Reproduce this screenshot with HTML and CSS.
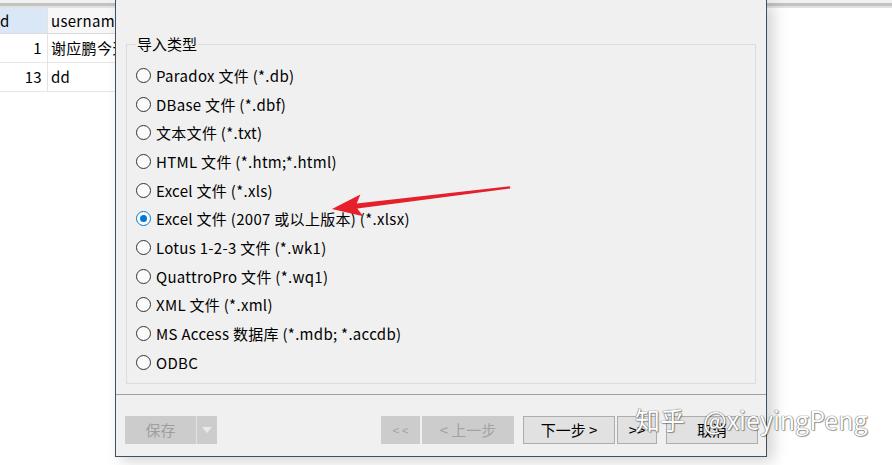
FILE: index.html
```html
<!DOCTYPE html>
<html lang="zh-CN">
<head>
<meta charset="utf-8">
<title>导入向导</title>
<link rel="stylesheet" href="styles.css">
</head>
<body>
<div class="screen">
  <div class="topbar"></div>
  <div class="grid">
    <div class="row head">
      <div class="c1">d</div>
      <div class="c2">username</div>
    </div>
    <div class="row">
      <div class="c1 num">1</div>
      <div class="c2">谢应鹏今天很开心</div>
    </div>
    <div class="row">
      <div class="c1 num">13</div>
      <div class="c2">dd</div>
    </div>
  </div>

  <div class="dialog">
    <div class="body">
      <fieldset class="group">
        <legend>导入类型</legend>
        <div class="opt"><span class="radio"></span>Paradox 文件 (*.db)</div>
        <div class="opt"><span class="radio"></span>DBase 文件 (*.dbf)</div>
        <div class="opt"><span class="radio"></span>文本文件 (*.txt)</div>
        <div class="opt"><span class="radio"></span>HTML 文件 (*.htm;*.html)</div>
        <div class="opt"><span class="radio"></span>Excel 文件 (*.xls)</div>
        <div class="opt"><span class="radio on"></span>Excel 文件 (2007 或以上版本) (*.xlsx)</div>
        <div class="opt"><span class="radio"></span>Lotus 1-2-3 文件 (*.wk1)</div>
        <div class="opt"><span class="radio"></span>QuattroPro 文件 (*.wq1)</div>
        <div class="opt"><span class="radio"></span>XML 文件 (*.xml)</div>
        <div class="opt"><span class="radio"></span>MS Access 数据库 (*.mdb; *.accdb)</div>
        <div class="opt"><span class="radio"></span>ODBC</div>
      </fieldset>
    </div>
    <div class="sep"></div>
    <div class="actions">
      <div class="split">
        <div class="split-main">保存</div>
        <div class="split-drop"><svg width="12" height="8" viewBox="0 0 12 8"><path d="M1 1 L11 1 L6 7 Z" fill="#e9e9e9"/></svg></div>
      </div>
      <div class="nav">
        <div class="btn dis w39">&lt; &lt;</div>
        <div class="btn dis w92 g2">&lt; 上一步</div>
        <div class="btn w92 g9">下一步 &gt;</div>
        <div class="btn w40 g2">&gt;&gt;</div>
        <div class="btn w92 g9">取消</div>
      </div>
    </div>
  </div>

  <svg class="arrow" width="892" height="465" viewBox="0 0 892 465">
    <polygon points="332,209 360.4,194.4 356.7,203.6 509.8,186.2 510.4,188.4 357.3,208.4 363.2,216.2" fill="#e5202b"/>
  </svg>

  <div class="watermark"><span>知乎</span><span class="handle">@xieyingPeng</span></div>
</div>
</body>
</html>
```

FILE: styles.css
```css
html, body {
  margin: 0;
  padding: 0;
  background: #fff;
}

.screen {
  position: relative;
  width: 892px;
  height: 465px;
  overflow: hidden;
  background: #fff;
  font-family: "Noto Sans CJK SC", "Noto Sans", sans-serif;
  color: #000;
}

.topbar {
  height: 3px;
  background: #f2f2f2;
  border-bottom: 3px solid #c2c2c2;
  box-shadow: 0 2px 0 #e2e2e2;
  margin-bottom: 2px;
}

.grid {
  width: 115px;
  font-size: 15px;
  letter-spacing: 0.3px;
}

.row {
  display: flex;
  height: 28px;
  border-bottom: 1px solid #e6e6e6;
  line-height: 28px;
  white-space: nowrap;
  overflow: hidden;
}

.row.head {
  height: 25px;
  line-height: 25px;
  border-bottom: 1px solid #dcdcdc;
}

.c1 {
  width: 48px;
  flex: none;
  box-sizing: border-box;
  border-right: 1px solid #e3e3e3;
}

.row.head .c1 {
  background: #d9e7f6;
}

.row.head .c2 {
  background: #f7f7f7;
}

.c1.num {
  text-align: right;
  padding-right: 5px;
}

.c2 {
  flex: 1;
  padding-left: 3px;
  overflow: hidden;
}

/* dialog window floating over the app */
.dialog {
  position: absolute;
  left: 115px;
  top: 0;
  width: 650px;
  height: 456px;
  background: #f0f0f0;
  border-left: 1px solid #3f515e;
  border-right: 1px solid #3f515e;
  border-bottom: 1px solid #3f515e;
  box-shadow: 6px 4px 14px rgba(0, 0, 0, 0.18);
}

.body {
  padding: 35px 10px 0 10px;
}

.group {
  margin: 0;
  border: 1px solid #dcdcdc;
  padding: 8px 0 6px 9px;
  min-width: 0;
}

.group legend {
  padding: 0 1px;
  margin-left: 0;
  font-size: 15px;
  line-height: 18px;
}

.opt {
  display: flex;
  align-items: center;
  height: 28.7px;
  font-size: 15px;
  letter-spacing: 0.3px;
  white-space: nowrap;
}

.radio {
  width: 15px;
  height: 15px;
  box-sizing: border-box;
  border: 1px solid #333;
  border-radius: 50%;
  background: #fbfbfb;
  margin-right: 5px;
  flex: none;
  position: relative;
}

.radio.on {
  border-color: #0078d7;
  background: #fff;
}

.radio.on::after {
  content: "";
  position: absolute;
  left: 3px;
  top: 3px;
  width: 7px;
  height: 7px;
  border-radius: 50%;
  background: #0078d7;
}

.sep {
  margin-top: 10px;
  border-top: 1px solid #a0a0a0;
}

.actions {
  display: flex;
  padding: 21px 8px 0 9px;
}

.split {
  display: flex;
  height: 28px;
  background: #cccccc;
}

.split-main {
  width: 71px;
  display: flex;
  align-items: center;
  justify-content: center;
  font-size: 15px;
  color: #9e9e9e;
}

.split-drop {
  width: 20px;
  border-left: 1px solid #e2e2e2;
  display: flex;
  align-items: center;
  justify-content: center;
}

.nav {
  margin-left: auto;
  display: flex;
}

.btn {
  height: 28px;
  box-sizing: border-box;
  border: 1px solid #adadad;
  background: #e1e1e1;
  display: flex;
  align-items: center;
  justify-content: center;
  font-size: 15px;
  color: #000;
  white-space: nowrap;
}

.btn.dis {
  background: #cccccc;
  border-color: #cccccc;
  color: #a3a3a3;
}

.w39 { width: 39px; font-size: 12px; }
.w40 { width: 40px; }
.w92 { width: 92px; }
.g2 { margin-left: 2px; }
.g9 { margin-left: 9px; }

.arrow {
  position: absolute;
  left: 0;
  top: 0;
  pointer-events: none;
}

.watermark {
  position: absolute;
  left: 635px;
  top: 403px;
  font-size: 25px;
  line-height: 32px;
  color: #fff;
  white-space: nowrap;
  text-shadow: 0 0 1px #5e5e5e, 0 0 1px #5e5e5e, 1px 1px 1px rgba(0, 0, 0, 0.35);
}

.watermark .handle {
  margin-left: 18px;
}
```
